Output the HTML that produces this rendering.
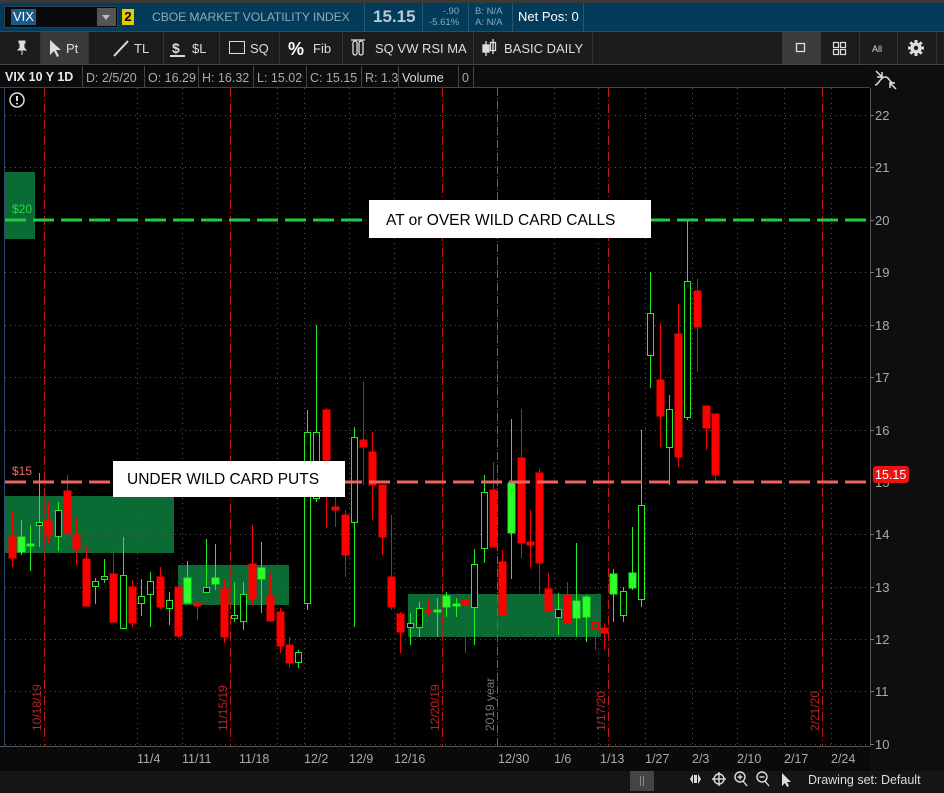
<!DOCTYPE html>
<html><head><meta charset="utf-8"><style>
*{margin:0;padding:0;box-sizing:border-box}
body{width:944px;height:793px;background:#0a0a0a;font-family:"Liberation Sans",sans-serif;overflow:hidden;position:relative;color:#ddd}
.a{position:absolute;white-space:nowrap}
</style></head><body>
<div class="a" style="left:0;top:0;width:944px;height:3px;background:#3a3a3a"></div>
<div class="a" style="left:0;top:3px;width:944px;height:28px;background:#023c5a"></div>
<div class="a" style="left:4px;top:6px;width:114px;height:22px;background:#0a0a0a;border:1px solid #2a4050"></div>
<div class="a" style="left:11px;top:9px;height:16px;padding:0 2px;background:#1b5a8c;color:#fff;font-size:13px;line-height:16px">VIX</div>
<div class="a" style="left:97px;top:8px;width:19px;height:18px;background:#555"></div>
<div class="a" style="left:102px;top:15px;width:0;height:0;border-left:4px solid transparent;border-right:4px solid transparent;border-top:5px solid #bbb"></div>
<div class="a" style="left:122px;top:9px;width:12px;height:16px;background:#e6c800;color:#000;font-size:13px;font-weight:bold;text-align:center;line-height:16px">2</div>
<div class="a" style="left:152px;top:10px;font-size:12.2px;letter-spacing:-0.1px;color:#8fa9bb">CBOE MARKET VOLATILITY INDEX</div>
<div class="a" style="left:364px;top:3px;width:1px;height:28px;background:#2a5570"></div>
<div class="a" style="left:373px;top:7px;font-size:17px;font-weight:bold;color:#b9c8d2">15.15</div>
<div class="a" style="left:422px;top:3px;width:1px;height:28px;background:#2a5570"></div>
<div class="a" style="left:429px;top:6px;font-size:9.5px;line-height:11px;color:#8fa9bb;text-align:right">-.90<br>-5.61%</div>
<div class="a" style="left:468px;top:3px;width:1px;height:28px;background:#2a5570"></div>
<div class="a" style="left:475px;top:6px;font-size:9.5px;line-height:11px;color:#8fa9bb">B: N/A<br>A: N/A</div>
<div class="a" style="left:512px;top:3px;width:1px;height:28px;background:#2a5570"></div>
<div class="a" style="left:518px;top:9px;font-size:13px;color:#fff">Net Pos: 0</div>
<div class="a" style="left:583px;top:3px;width:1px;height:28px;background:#2a5570"></div>

<div class="a" style="left:0;top:31px;width:944px;height:34px;background:#1c1c1c;border-top:1px solid #444;border-bottom:1px solid #444"></div>
<div class="a" style="left:40px;top:32px;width:48px;height:32px;background:#3a3a3a"></div>
<div class="a" style="left:782px;top:32px;width:38px;height:32px;background:#3c3c3c"></div>
<svg class="a" style="left:0;top:31px" width="944" height="34">
<g stroke="#333" stroke-width="1"><line x1="40.5" y1="1" x2="40.5" y2="33"/><line x1="88.5" y1="1" x2="88.5" y2="33"/><line x1="163.5" y1="1" x2="163.5" y2="33"/><line x1="219.5" y1="1" x2="219.5" y2="33"/><line x1="279.5" y1="1" x2="279.5" y2="33"/><line x1="342.5" y1="1" x2="342.5" y2="33"/><line x1="473.5" y1="1" x2="473.5" y2="33"/><line x1="592.5" y1="1" x2="592.5" y2="33"/><line x1="820.5" y1="1" x2="820.5" y2="33"/><line x1="859.5" y1="1" x2="859.5" y2="33"/><line x1="897.5" y1="1" x2="897.5" y2="33"/><line x1="936.5" y1="1" x2="936.5" y2="33"/></g>
<path d="M19 10h6v2h-1v5l2 2h-8l2-2v-5h-1z M22 19v5" stroke="#ddd" fill="#ddd" stroke-width="1"/>
<path d="M50 9l0 15 4-4 3 6 2-1-3-6 5 0z" fill="#ddd"/>
<line x1="114" y1="25" x2="128" y2="10" stroke="#ddd" stroke-width="2"/>
<text x="134" y="22" font-size="13" fill="#ddd">TL</text>
<text x="172" y="22" font-size="14" fill="#ddd" font-weight="bold">$</text><line x1="170" y1="25" x2="185" y2="25" stroke="#ddd" stroke-width="2"/>
<text x="192" y="22" font-size="13" fill="#ddd">$L</text>
<rect x="229.5" y="10.5" width="15" height="12" fill="none" stroke="#ddd"/>
<text x="250" y="22" font-size="13" fill="#ddd">SQ</text>
<text x="288" y="24" font-size="18" fill="#fff" font-weight="bold">%</text>
<text x="313" y="22" font-size="13" fill="#ddd">Fib</text>
<g stroke="#ddd" fill="none" stroke-width="1.3"><rect x="353" y="10" width="4" height="14" rx="2"/><rect x="359" y="10" width="4" height="14" rx="2"/><line x1="351" y1="9" x2="365" y2="9"/></g>
<text x="375" y="22" font-size="13" fill="#ddd">SQ VW RSI MA</text>
<g stroke="#ddd" stroke-width="1.3"><line x1="486" y1="10" x2="486" y2="25"/><rect x="483" y="14" width="6" height="7" fill="#ddd"/><line x1="493" y1="8" x2="493" y2="23"/><rect x="490.5" y="11.5" width="5" height="8" fill="none"/></g>
<text x="504" y="22" font-size="13" fill="#ddd">BASIC DAILY</text>
<rect x="796.5" y="12.5" width="8" height="8" fill="none" stroke="#ddd" stroke-width="1.3"/>
<g fill="none" stroke="#ddd" stroke-width="1.2"><rect x="833.5" y="11.5" width="5" height="5"/><rect x="840.5" y="11.5" width="5" height="5"/><rect x="833.5" y="18.5" width="5" height="5"/><rect x="840.5" y="18.5" width="5" height="5"/></g>
<text x="872" y="21" font-size="9" fill="#ddd">All</text>
<g transform="translate(916,17)"><circle r="5.5" fill="#ddd"/><g stroke="#ddd" stroke-width="3"><line x1="-8" y1="0" x2="8" y2="0"/><line x1="0" y1="-8" x2="0" y2="8"/><line x1="-5.7" y1="-5.7" x2="5.7" y2="5.7"/><line x1="-5.7" y1="5.7" x2="5.7" y2="-5.7"/></g><circle r="2.2" fill="#1c1c1c"/></g>
<text x="66" y="22" font-size="13" fill="#ddd">Pt</text>
</svg>

<div class="a" style="left:0;top:66px;width:870px;height:22px;background:#0c0c0c;border-bottom:1px solid #444"></div>
<div class="a" style="left:870px;top:66px;width:74px;height:727px;background:#0e0e0e"></div>
<div class="a" style="left:5px;top:69px;font-size:12.5px;line-height:16px;color:#e8e8e8"><b>VIX 10 Y 1D</b></div>
<svg class="a" style="left:0;top:66px" width="480" height="22">
<g stroke="#444"><line x1="82.5" y1="0" x2="82.5" y2="22"/><line x1="144.5" y1="0" x2="144.5" y2="22"/><line x1="198.5" y1="0" x2="198.5" y2="22"/><line x1="253.5" y1="0" x2="253.5" y2="22"/><line x1="306.5" y1="0" x2="306.5" y2="22"/><line x1="361.5" y1="0" x2="361.5" y2="22"/><line x1="398.5" y1="0" x2="398.5" y2="22"/><line x1="458.5" y1="0" x2="458.5" y2="22"/><line x1="473.5" y1="0" x2="473.5" y2="22"/></g>
<g font-size="12.5" fill="#aaa"><text x="86" y="16">D: 2/5/20</text><text x="148" y="16">O: 16.29</text><text x="202" y="16">H: 16.32</text><text x="257" y="16">L: 15.02</text><text x="310" y="16">C: 15.15</text><text x="365" y="16">R: 1.3</text><text x="402" y="16" fill="#ddd">Volume</text><text x="462" y="16">0</text></g>
</svg>
<svg class="a" style="left:872px;top:66px" width="30" height="24"><g stroke="#ddd" stroke-width="1.5" fill="none"><path d="M4 5l6 6M10 6v5h-5"/><path d="M3 19c4 0 5-8 10-8s4 6 9 6"/><path d="M24 23l-6-6M18 22v-5h5"/></g></svg>

<svg class="a" style="left:0;top:88px" width="944" height="705">
<g transform="translate(0,-88)">
<rect x="0" y="88" width="870" height="658" fill="#000"/>
<line x1="4.5" y1="88" x2="4.5" y2="746" stroke="#2a4a6a"/>
<g fill="#0b6b34"><rect x="5" y="172" width="30" height="67"/><rect x="5" y="496" width="169" height="57"/><rect x="178" y="565" width="111" height="40"/><rect x="408" y="594" width="193" height="43"/></g>
<g stroke="#555" stroke-width="1" stroke-dasharray="1,4"><line x1="5" y1="115.5" x2="868" y2="115.5"/><line x1="5" y1="167.5" x2="868" y2="167.5"/><line x1="5" y1="272.5" x2="868" y2="272.5"/><line x1="5" y1="325.5" x2="868" y2="325.5"/><line x1="5" y1="377.5" x2="868" y2="377.5"/><line x1="5" y1="430.5" x2="868" y2="430.5"/><line x1="5" y1="534.5" x2="868" y2="534.5"/><line x1="5" y1="587.5" x2="868" y2="587.5"/><line x1="5" y1="639.5" x2="868" y2="639.5"/><line x1="5" y1="691.5" x2="868" y2="691.5"/><line x1="5" y1="744.5" x2="868" y2="744.5"/>
<line x1="137.5" y1="88" x2="137.5" y2="746"/><line x1="182.5" y1="88" x2="182.5" y2="746"/><line x1="277.5" y1="88" x2="277.5" y2="746"/><line x1="304.5" y1="88" x2="304.5" y2="746"/><line x1="349.5" y1="88" x2="349.5" y2="746"/><line x1="394.5" y1="88" x2="394.5" y2="746"/><line x1="554.5" y1="88" x2="554.5" y2="746"/><line x1="598.5" y1="88" x2="598.5" y2="746"/><line x1="645.5" y1="88" x2="645.5" y2="746"/><line x1="692.5" y1="88" x2="692.5" y2="746"/><line x1="737.5" y1="88" x2="737.5" y2="746"/><line x1="784.5" y1="88" x2="784.5" y2="746"/><line x1="831.5" y1="88" x2="831.5" y2="746"/></g>
<line x1="497.5" y1="88" x2="497.5" y2="746" stroke="#666" stroke-dasharray="8,2,1,2"/>
<g stroke="#c01818" stroke-width="1" stroke-dasharray="9,3,1,3"><line x1="44.5" y1="88" x2="44.5" y2="746"/><line x1="230.5" y1="88" x2="230.5" y2="746"/><line x1="442.5" y1="88" x2="442.5" y2="746"/><line x1="608.5" y1="88" x2="608.5" y2="746"/><line x1="822.5" y1="88" x2="822.5" y2="746"/></g>
<g font-size="12" fill="#c02020"><text transform="translate(41,731) rotate(-90)">10/18/19</text><text transform="translate(227,731) rotate(-90)">11/15/19</text><text transform="translate(439,731) rotate(-90)">12/20/19</text><text transform="translate(605,731) rotate(-90)">1/17/20</text><text transform="translate(819,731) rotate(-90)">2/21/20</text></g>
<text transform="translate(494,731) rotate(-90)" font-size="12" fill="#777">2019 year</text>
<g stroke-width="1">
<g stroke="#ff0000" fill="#ff0000">
<line x1="12.5" y1="512" x2="12.5" y2="567"/><rect x="9" y="537" width="7" height="21"/>
<line x1="48.5" y1="502" x2="48.5" y2="543"/><rect x="45" y="521" width="7" height="14"/>
<line x1="67.5" y1="475" x2="67.5" y2="545"/><rect x="64" y="491" width="7" height="42"/>
<line x1="76.5" y1="517" x2="76.5" y2="565"/><rect x="73" y="535" width="7" height="14"/>
<line x1="86.5" y1="545" x2="86.5" y2="606"/><rect x="83" y="559" width="7" height="47"/>
<line x1="113.5" y1="546" x2="113.5" y2="623"/><rect x="110" y="574" width="7" height="48"/>
<line x1="132.5" y1="580" x2="132.5" y2="627"/><rect x="129" y="587" width="7" height="36"/>
<line x1="160.5" y1="567" x2="160.5" y2="609"/><rect x="157" y="577" width="7" height="30"/>
<line x1="178.5" y1="587" x2="178.5" y2="638"/><rect x="175" y="587" width="7" height="49"/>
<line x1="197.5" y1="582" x2="197.5" y2="620"/><rect x="194" y="603" width="7" height="3"/>
<line x1="224.5" y1="580" x2="224.5" y2="643"/><rect x="221" y="589" width="7" height="48"/>
<line x1="252.5" y1="525" x2="252.5" y2="605"/><rect x="249" y="564" width="7" height="35"/>
<line x1="270.5" y1="573" x2="270.5" y2="622"/><rect x="267" y="596" width="7" height="25"/>
<line x1="280.5" y1="608" x2="280.5" y2="653"/><rect x="277" y="612" width="7" height="34"/>
<line x1="289.5" y1="637" x2="289.5" y2="668"/><rect x="286" y="645" width="7" height="18"/>
<line x1="326.5" y1="408" x2="326.5" y2="528"/><rect x="323" y="410" width="7" height="50"/>
<line x1="335.5" y1="497" x2="335.5" y2="527"/><rect x="332" y="507" width="7" height="3"/>
<line x1="345.5" y1="510" x2="345.5" y2="577"/><rect x="342" y="515" width="7" height="40"/>
<line x1="363.5" y1="382" x2="363.5" y2="485"/><rect x="360" y="440" width="7" height="7"/>
<line x1="372.5" y1="432" x2="372.5" y2="520"/><rect x="369" y="452" width="7" height="33"/>
<line x1="382.5" y1="485" x2="382.5" y2="555"/><rect x="379" y="485" width="7" height="52"/>
<line x1="391.5" y1="515" x2="391.5" y2="610"/><rect x="388" y="577" width="7" height="30"/>
<line x1="400.5" y1="612" x2="400.5" y2="653"/><rect x="397" y="614" width="7" height="18"/>
<line x1="428.5" y1="599" x2="428.5" y2="615"/><rect x="425" y="610" width="7" height="2"/>
<line x1="465.5" y1="600" x2="465.5" y2="653"/><rect x="462" y="600" width="7" height="5"/>
<line x1="493.5" y1="462" x2="493.5" y2="547"/><rect x="490" y="490" width="7" height="57"/>
<line x1="502.5" y1="550" x2="502.5" y2="615"/><rect x="499" y="562" width="7" height="53"/>
<line x1="521.5" y1="409" x2="521.5" y2="558"/><rect x="518" y="458" width="7" height="85"/>
<line x1="530.5" y1="510" x2="530.5" y2="567"/><rect x="527" y="542" width="7" height="3"/>
<line x1="539.5" y1="469" x2="539.5" y2="595"/><rect x="536" y="473" width="7" height="90"/>
<line x1="548.5" y1="573" x2="548.5" y2="611"/><rect x="545" y="589" width="7" height="22"/>
<line x1="567.5" y1="582" x2="567.5" y2="623"/><rect x="564" y="595" width="7" height="28"/>
<line x1="604.5" y1="623" x2="604.5" y2="650"/><rect x="601" y="628" width="7" height="5"/>
<line x1="660.5" y1="323" x2="660.5" y2="447"/><rect x="657" y="380" width="7" height="36"/>
<line x1="678.5" y1="304" x2="678.5" y2="467"/><rect x="675" y="334" width="7" height="123"/>
<line x1="697.5" y1="279" x2="697.5" y2="372"/><rect x="694" y="291" width="7" height="36"/>
<line x1="706.5" y1="406" x2="706.5" y2="450"/><rect x="703" y="406" width="7" height="22"/>
<line x1="715.5" y1="414" x2="715.5" y2="483"/><rect x="712" y="414" width="7" height="61"/>
</g>
<g stroke="#ff0000" fill="none"><line x1="595.5" y1="618" x2="595.5" y2="622"/><line x1="595.5" y1="628" x2="595.5" y2="650"/><rect x="592.5" y="622.5" width="6" height="6"/></g>
<g stroke="#22ee22" fill="#2cff2c">
<line x1="21.5" y1="520" x2="21.5" y2="555"/><rect x="18" y="537" width="7" height="15"/>
<line x1="30.5" y1="525" x2="30.5" y2="571"/><rect x="27" y="544" width="7" height="2"/>
<line x1="187.5" y1="561" x2="187.5" y2="604"/><rect x="184" y="578" width="7" height="25"/>
<line x1="215.5" y1="544" x2="215.5" y2="590"/><rect x="212" y="578" width="7" height="6"/>
<line x1="261.5" y1="542" x2="261.5" y2="613"/><rect x="258" y="568" width="7" height="11"/>
<line x1="437.5" y1="598" x2="437.5" y2="637"/><rect x="434" y="610" width="7" height="2"/>
<line x1="446.5" y1="592" x2="446.5" y2="617"/><rect x="443" y="596" width="7" height="11"/>
<line x1="456.5" y1="598" x2="456.5" y2="617"/><rect x="453" y="604" width="7" height="2"/>
<line x1="511.5" y1="419" x2="511.5" y2="579"/><rect x="508" y="483" width="7" height="50"/>
<line x1="576.5" y1="543" x2="576.5" y2="637"/><rect x="573" y="601" width="7" height="17"/>
<line x1="586.5" y1="595" x2="586.5" y2="642"/><rect x="583" y="597" width="7" height="20"/>
<line x1="613.5" y1="569" x2="613.5" y2="622"/><rect x="610" y="574" width="7" height="20"/>
<line x1="632.5" y1="527" x2="632.5" y2="590"/><rect x="629" y="573" width="7" height="15"/>
</g>
<g stroke="#22ee22" fill="#000">
<line x1="39.5" y1="473" x2="39.5" y2="547"/><rect x="36.5" y="522.5" width="6" height="3"/>
<line x1="58.5" y1="502" x2="58.5" y2="551"/><rect x="55.5" y="510.5" width="6" height="26"/>
<line x1="95.5" y1="578" x2="95.5" y2="604"/><rect x="92.5" y="581.5" width="6" height="5"/>
<line x1="104.5" y1="559" x2="104.5" y2="583"/><rect x="101.5" y="576.5" width="6" height="3"/>
<line x1="123.5" y1="537" x2="123.5" y2="628"/><rect x="120.5" y="575.5" width="6" height="53"/>
<line x1="141.5" y1="579" x2="141.5" y2="616"/><rect x="138.5" y="596.5" width="6" height="7"/>
<line x1="150.5" y1="572" x2="150.5" y2="627"/><rect x="147.5" y="581.5" width="6" height="13"/>
<line x1="169.5" y1="592" x2="169.5" y2="625"/><rect x="166.5" y="600.5" width="6" height="8"/>
<line x1="206.5" y1="539" x2="206.5" y2="593"/><rect x="203.5" y="587.5" width="6" height="5"/>
<line x1="234.5" y1="582" x2="234.5" y2="622"/><rect x="231.5" y="615.5" width="6" height="3"/>
<line x1="243.5" y1="582" x2="243.5" y2="630"/><rect x="240.5" y="594.5" width="6" height="27"/>
<line x1="298.5" y1="650" x2="298.5" y2="668"/><rect x="295.5" y="652.5" width="6" height="10"/>
<line x1="307.5" y1="410" x2="307.5" y2="610"/><rect x="304.5" y="432.5" width="6" height="171"/>
<line x1="316.5" y1="325" x2="316.5" y2="502"/><rect x="313.5" y="432.5" width="6" height="66"/>
<line x1="354.5" y1="427" x2="354.5" y2="627"/><rect x="351.5" y="437.5" width="6" height="85"/>
<line x1="410.5" y1="613" x2="410.5" y2="645"/><rect x="407.5" y="623.5" width="6" height="4"/>
<line x1="419.5" y1="602" x2="419.5" y2="637"/><rect x="416.5" y="608.5" width="6" height="19"/>
<line x1="474.5" y1="549" x2="474.5" y2="645"/><rect x="471.5" y="564.5" width="6" height="43"/>
<line x1="484.5" y1="475" x2="484.5" y2="563"/><rect x="481.5" y="492.5" width="6" height="56"/>
<line x1="558.5" y1="593" x2="558.5" y2="635"/><rect x="555.5" y="609.5" width="6" height="8"/>
<line x1="623.5" y1="587" x2="623.5" y2="622"/><rect x="620.5" y="591.5" width="6" height="24"/>
<line x1="641.5" y1="430" x2="641.5" y2="607"/><rect x="638.5" y="505.5" width="6" height="94"/>
<line x1="650.5" y1="272" x2="650.5" y2="388"/><rect x="647.5" y="313.5" width="6" height="42"/>
<line x1="669.5" y1="395" x2="669.5" y2="485"/><rect x="666.5" y="409.5" width="6" height="38"/>
<line x1="687.5" y1="220" x2="687.5" y2="420"/><rect x="684.5" y="281.5" width="6" height="136"/>
</g>
</g>
<line x1="5" y1="220" x2="868" y2="220" stroke="#1fcc3f" stroke-width="3" stroke-dasharray="21,7"/>
<line x1="5" y1="482" x2="868" y2="482" stroke="#f0625e" stroke-width="3" stroke-dasharray="21,7"/>
<text x="12" y="213" font-size="12" fill="#22dd44">$20</text>
<text x="12" y="475" font-size="12" fill="#f06a66">$15</text>
<rect x="369" y="200" width="282" height="38" fill="#fff"/>
<text x="386" y="225" font-size="15.5" fill="#000">AT or OVER WILD CARD CALLS</text>
<rect x="113" y="461" width="232" height="36" fill="#fff"/>
<text x="127" y="484" font-size="15.5" fill="#000">UNDER WILD CARD PUTS</text>
<circle cx="17" cy="100" r="7" fill="none" stroke="#ddd" stroke-width="1.5"/><line x1="17" y1="96" x2="17" y2="101" stroke="#ddd" stroke-width="2"/><circle cx="17" cy="103.5" r="1" fill="#ddd"/>
<line x1="870.5" y1="88" x2="870.5" y2="746" stroke="#555"/>
<line x1="0" y1="746.5" x2="870" y2="746.5" stroke="#555"/>
<g stroke="#777"><line x1="870" y1="115.5" x2="874" y2="115.5"/><line x1="870" y1="167.5" x2="874" y2="167.5"/><line x1="870" y1="220.5" x2="874" y2="220.5"/><line x1="870" y1="272.5" x2="874" y2="272.5"/><line x1="870" y1="325.5" x2="874" y2="325.5"/><line x1="870" y1="377.5" x2="874" y2="377.5"/><line x1="870" y1="430.5" x2="874" y2="430.5"/><line x1="870" y1="534.5" x2="874" y2="534.5"/><line x1="870" y1="587.5" x2="874" y2="587.5"/><line x1="870" y1="639.5" x2="874" y2="639.5"/><line x1="870" y1="691.5" x2="874" y2="691.5"/><line x1="870" y1="744.5" x2="874" y2="744.5"/></g>
<g font-size="13" fill="#aaa"><text x="875" y="120">22</text><text x="875" y="172">21</text><text x="875" y="225">20</text><text x="875" y="277">19</text><text x="875" y="330">18</text><text x="875" y="382">17</text><text x="875" y="435">16</text><text x="875" y="487">15</text><text x="875" y="539">14</text><text x="875" y="592">13</text><text x="875" y="644">12</text><text x="875" y="696">11</text><text x="875" y="749">10</text></g>
<rect x="873" y="466" width="36" height="17" rx="3" fill="#ee1111"/>
<text x="875" y="479" font-size="12.5" fill="#fff">15.15</text>
<g font-size="12.5" fill="#aaa"><text x="137" y="763">11/4</text><text x="182" y="763">11/11</text><text x="239" y="763">11/18</text><text x="304" y="763">12/2</text><text x="349" y="763">12/9</text><text x="394" y="763">12/16</text><text x="498" y="763">12/30</text><text x="554" y="763">1/6</text><text x="600" y="763">1/13</text><text x="645" y="763">1/27</text><text x="692" y="763">2/3</text><text x="737" y="763">2/10</text><text x="784" y="763">2/17</text><text x="831" y="763">2/24</text></g>
<rect x="0" y="771" width="944" height="22" fill="#151515"/>
<rect x="630" y="771" width="24" height="20" fill="#444"/>
<g stroke="#888"><line x1="640.5" y1="776" x2="640.5" y2="786"/><line x1="643.5" y1="776" x2="643.5" y2="786"/></g>
<g fill="#ddd"><path d="M693 774l-3 5 3 5z M698 774l3 5-3 5z"/><rect x="694" y="775" width="3" height="8"/></g>
<g stroke="#ddd" fill="none" stroke-width="1.4"><circle cx="719" cy="779" r="5"/><line x1="712" y1="779" x2="726" y2="779"/><line x1="719" y1="772" x2="719" y2="786"/>
<circle cx="740" cy="777" r="5"/><line x1="743" y1="781" x2="747" y2="786"/><line x1="737.5" y1="777" x2="742.5" y2="777"/><line x1="740" y1="774.5" x2="740" y2="779.5"/>
<circle cx="762" cy="777" r="5"/><line x1="765" y1="781" x2="769" y2="786"/><line x1="759.5" y1="777" x2="764.5" y2="777"/></g>
<path d="M782 773v13l3-3 2 4 2-1-2-4h4z" fill="#ddd"/>
<text x="808" y="784" font-size="12.5" fill="#ddd">Drawing set: Default</text>
</g></svg>
</body></html>
